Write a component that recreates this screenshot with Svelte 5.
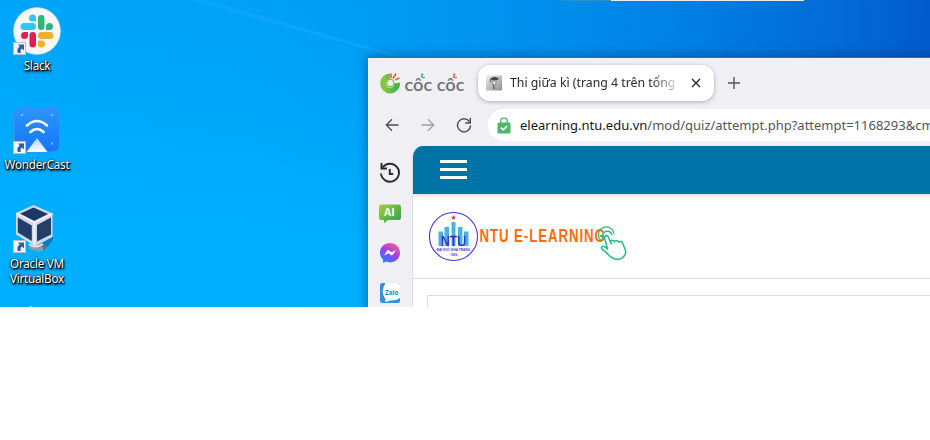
<script>
  const url = { host: 'elearning.ntu.edu.vn', path: '/mod/quiz/attempt.php?attempt=1168293&cm' };
</script>

{#snippet shortcut()}
  <g>
    <rect x="0.5" y="35.5" width="12" height="12" fill="#f4f6fa" stroke="#b9bfc8" />
    <path d="M5 37.500h6v6l-2-2c-1.500 1.200-1.800 2.600-1.200 4.500h-3c-1-2.800-.4-4.900 1.900-6.500z" fill="#2f5fa6" />
  </g>
{/snippet}

<main class="desktop">
  <svg class="ray" viewBox="0 0 400 58" aria-hidden="true">
    <defs>
      <linearGradient id="rayFill" x1="0" x2="1">
        <stop offset="0" stop-color="#5cc6ff" stop-opacity="0.08" />
        <stop offset="1" stop-color="#5cc6ff" stop-opacity="0.18" />
      </linearGradient>
    </defs>
    <path d="M190 0h16L400 56h-8z" fill="url(#rayFill)" />
  </svg>
  <div class="strip"><span class="teal"></span><span class="light"></span></div>

  <nav class="shortcuts">
    <div class="cell">
      <svg width="48" height="48" viewBox="0 0 48 48">
        <circle cx="24" cy="24" r="23.300" fill="#f7f7f7" stroke="#dcebf4" stroke-width="0.8" />
        <g fill="#36c5f0"><rect x="7.500" y="16" width="15.500" height="7" rx="3.500" /><path d="M23 14.500h-3.500a3.500 3.500 0 1 1 3.500-3.500z" /></g>
        <g fill="#2eb67d"><rect x="25" y="8" width="6.500" height="15" rx="3.250" /><path d="M33 23v-3.500a3.500 3.500 0 1 1 3.500 3.500z" /></g>
        <g fill="#ecb22e"><rect x="25" y="25" width="15.500" height="7" rx="3.500" /><path d="M25 33.500h3.500a3.500 3.500 0 1 1-3.500 3.500z" /></g>
        <g fill="#e01e5a"><rect x="16.500" y="25" width="6.500" height="15.500" rx="3.250" /><path d="M15 25v3.500a3.500 3.500 0 1 1-3.500-3.500z" /></g>
        {@render shortcut()}
      </svg>
      <span class="label">Slack</span>
    </div>
    <div class="cell">
      <svg width="48" height="48" viewBox="0 0 48 48">
        <defs>
          <linearGradient id="wc" x1="0" y1="0" x2="0" y2="1"><stop stop-color="#2b96fc" /><stop offset="1" stop-color="#1674f8" /></linearGradient>
          <linearGradient id="beam" x1="0" y1="0" x2="0" y2="1"><stop stop-color="#a8d2ff" /><stop offset="1" stop-color="#fff" /></linearGradient>
        </defs>
        <rect x="1.500" y="1.500" width="45" height="44.500" rx="7" fill="url(#wc)" stroke="#3f8fe8" />
        <g fill="none" stroke="#fff" stroke-width="2.600" stroke-linecap="round">
          <path d="M14 19.500q10-9 20 0" /><path d="M17.500 26q6.500-6 13 0" />
        </g>
        <path d="M24 32L34.500 46h-21z" fill="url(#beam)" />
        <path d="M8 10l2-2M38 8l2 2M38 38.500l2-2" stroke="#83cfff" stroke-width="1.200" />
        {@render shortcut()}
      </svg>
      <span class="label">WonderCast</span>
    </div>
    <div class="cell">
      <svg width="48" height="48" viewBox="0 0 48 48">
        <ellipse cx="25" cy="42" rx="9" ry="4" fill="#8f9ab0" />
        <path d="M28 39l12-8v4L31 46z" fill="#12416f" opacity="0.45" />
        <path d="M20.500 0l19 8.500V32L22 41 3 29.500V8z" fill="#d3d8e8" />
        <path d="M20.500 2.500l14.500 6.500-13.800 7L7 8.700z" fill="#1c3963" />
        <path d="M4.800 12.500l14 8v15.500l-14-8.500z" fill="#213d69" />
        <path d="M38 12.500v17l-14 7V20z" fill="#243f69" />
        <path d="M3.500 8.300l18 9.200 18-8.800M21.400 17.500V40" fill="none" stroke="#eef0fa" stroke-width="2" />
        <path d="M16 39q6 5 14 0" fill="none" stroke="#dfe4ef" stroke-width="2" />
        {@render shortcut()}
      </svg>
      <span class="label">Oracle VM<br />VirtualBox</span>
    </div>
    <svg class="next" width="8" height="2" viewBox="0 0 8 2"><path d="M2 2q2-2 4 0z" fill="#bfe6fb" /></svg>
  </nav>

  <section class="window">
    <header class="tabs">
      <svg class="brand" width="88" height="30" viewBox="0 0 88 30">
        <defs><linearGradient id="cc"><stop stop-color="#8bc53f" /><stop offset="1" stop-color="#43b649" /></linearGradient></defs>
        <path d="M12.500 8.200A7.200 7.200 0 1 0 19.300 15" fill="none" stroke="url(#cc)" stroke-width="5.600" />
        <circle cx="12.300" cy="15" r="3.600" fill="#f0eff4" stroke="#79c143" stroke-width="1.300" />
        <path d="M13.200 5.500l.6 5M18.500 5.500l-4 5.500M20.800 9.800l-5 3" stroke="#f0eff4" stroke-width="3" />
        <path d="M12.700 5.500l.8 4.500M18 5.500l-3 5M21.500 9.800l-4.500 2.300" stroke="#f15a36" stroke-width="1.500" />
        <text class="wordmark" x="26.500" y="22.500" textLength="60" lengthAdjust="spacingAndGlyphs">côc côc</text>
        <path d="M43 6.500q3-1 1 1.200t3 2" fill="none" stroke="#43b86a" stroke-width="1.300" />
        <path d="M75 6.500q3-1 1 1.200t3 2" fill="none" stroke="#f1634a" stroke-width="1.300" />
      </svg>
      <div class="tab">
        <svg width="16" height="16" viewBox="0 0 16 16">
          <defs><linearGradient id="fav" x1="0" y1="0" x2="1" y2="1"><stop stop-color="#eee" /><stop offset="1" stop-color="#8e8e8e" /></linearGradient></defs>
          <rect width="16" height="15" y="0.500" fill="url(#fav)" />
          <path d="M4 3.700l4-2L12.500 3v1.500l-3 .7H6z" fill="#444" /><path d="M5.500 6h5L9 10l-1 4-1-4z" fill="#ddd" stroke="#777" stroke-width="0.700" /><path d="M4.300 4v3.500M7.500 9l.5 5" stroke="#555" stroke-width="0.800" />
        </svg>
        <span class="title">Thi giữa kì (trang 4 trên tổng</span>
        <svg class="close" width="10" height="10" viewBox="0 0 10 10"><path d="M1 1l8 8M9 1L1 9" stroke="#222" stroke-width="1.300" /></svg>
      </div>
      <svg class="plus" width="12" height="12" viewBox="0 0 12 12"><path d="M6 0v12M0 6h12" stroke="#55555a" stroke-width="1.400" /></svg>
    </header>

    <div class="toolbar">
      <svg width="14" height="14" viewBox="0 0 14 14"><path d="M13.500 7H1.500M7 1.300L1.300 7 7 12.700" fill="none" stroke="#4c4b50" stroke-width="1.300" /></svg>
      <svg class="fwd" width="14" height="14" viewBox="0 0 14 14"><path d="M.5 7h12M7 1.300L12.700 7 7 12.700" fill="none" stroke="#a2a1a6" stroke-width="1.300" /></svg>
      <svg class="reload" width="16" height="16" viewBox="0 0 16 16"><path d="M13.600 5A6.500 6.500 0 1 0 14.500 8.500" fill="none" stroke="#4c4b50" stroke-width="1.400" /><path d="M14.300 1v5H9.300" fill="none" stroke="#4c4b50" stroke-width="1.400" /></svg>
      <div class="address">
        <svg width="14" height="17" viewBox="0 0 14 17"><path d="M3.700 7V4.200a3.300 3.300 0 0 1 6.600 0V7" fill="none" stroke="#62c173" stroke-width="1.500" /><rect x="0.500" y="5.500" width="13" height="11" rx="1.500" fill="#4db868" /><path d="M4 10.700l2.200 2.200 4-4" fill="none" stroke="#fff" stroke-width="1.700" /></svg>
        <span class="url">{url.host}<span class="path">{url.path}</span></span>
      </div>
    </div>

    <div class="body">
      <aside>
        <svg width="22" height="22" viewBox="0 0 22 22"><path d="M3.600 5.500A9 9 0 1 1 2 11.500" fill="none" stroke="#29292b" stroke-width="1.900" /><path d="M2.500 1v5.500H8" fill="none" stroke="#29292b" stroke-width="1.900" /><path d="M10.800 7v5h3.400" fill="none" stroke="#29292b" stroke-width="1.900" /></svg>
        <svg class="ai" width="22" height="20" viewBox="0 0 22 20">
          <defs><linearGradient id="ai" x1="0" y1="0" x2="1" y2="1"><stop stop-color="#a5cf37" /><stop offset="0.6" stop-color="#55b449" /><stop offset="1" stop-color="#329b50" /></linearGradient></defs>
          <path d="M2.500.5h17A2.500 2.500 0 0 1 22 3v10.500a2.500 2.500 0 0 1-2.500 2.500H9l-3.800 3.300L5 16H2.500A2.500 2.500 0 0 1 0 13.500V3A2.500 2.500 0 0 1 2.500.5z" fill="url(#ai)" />
          <text x="5" y="12" class="ai-text">AI</text>
        </svg>
        <svg class="msg" width="20" height="20" viewBox="0 0 20 20">
          <defs><linearGradient id="ms" x1="0.200" y1="1" x2="0.800" y2="0"><stop stop-color="#168aff" /><stop offset="0.5" stop-color="#9b3cf7" /><stop offset="1" stop-color="#fb6877" /></linearGradient></defs>
          <path d="M10 0C4.400 0 0 4.100 0 9.700c0 2.900 1.200 5.400 3.100 7.100V20l3.100-1.400A11 11 0 0 0 10 19.400c5.600 0 10-4.100 10-9.700S15.600 0 10 0z" fill="url(#ms)" />
          <path d="M4 12.500l3-4.700a1.500 1.500 0 0 1 2.200-.4l2.300 1.800L16 6.900l-3 4.700a1.500 1.500 0 0 1-2.200.4l-2.300-1.800z" fill="#fff" />
        </svg>
        <svg class="zalo" width="20" height="20" viewBox="0 0 20 20">
          <rect width="20" height="20" rx="2.500" fill="#358fda" />
          <path d="M5.500 0h12A2.500 2.500 0 0 1 20 2.500V15q-4 3-10 2.500-3 1.500-5.500 1.300 1.500-1 .9-2.800-5.500-7 .1-16z" fill="#fff" />
          <text x="5" y="11.500" class="zalo-text" textLength="13.500" lengthAdjust="spacingAndGlyphs">Zalo</text>
        </svg>
      </aside>

      <article>
        <div class="topbar"><div class="burger"><i></i><i></i><i></i></div></div>
        <div class="site">
          <svg width="200" height="54" viewBox="0 0 200 54">
            <circle cx="24.500" cy="27.500" r="24" fill="#fff" stroke="#4932d9" stroke-width="1.100" />
            <path d="M24.500 6l.7 1.700 1.900.1-1.500 1.200.5 1.800-1.600-1-1.600 1 .5-1.800-1.500-1.200 1.900-.1z" fill="#e33a28" />
            <path d="M9.500 37V22.500H14v14.500zM15.500 37V18H20V37zM22.500 37V13h4v24zM29 37V18H33.500V37zM35 37V22.500h4.500v14.500z" fill="#48b3df" />
            <text x="12" y="36.800" class="ntu" textLength="25" lengthAdjust="spacingAndGlyphs">NTU</text>
            <text x="7.700" y="41.700" class="tiny" textLength="33.500" lengthAdjust="spacingAndGlyphs">ĐẠI HỌC NHA TRANG</text>
            <text x="21.300" y="46.700" class="tiny" textLength="7" lengthAdjust="spacingAndGlyphs">1959</text>
            <text transform="translate(50.500 32.500) scale(.7 1)" x="0" y="0" class="learn" textLength="179">NTU E-LEARNING</text>
            <g fill="none" stroke="#20bd83" stroke-width="1.500" stroke-linejoin="round" stroke-linecap="round">
              <path d="M174.500 30.500a5 5 0 1 1 8.500-5" /><path d="M171.500 31a7.800 7.800 0 1 1 13.500-6" stroke-width="1.100" />
              <path d="M177.500 41l-2.800-10.500c-.7-3 2.800-4 3.800-1.200l2.700 6.700-.8-2.500c1-2 3.300-1.300 3.900.4.900-1.800 3.500-1.700 4.200.2 1.500-1.300 3.600-.6 4.200 1.200l2.600 6.500c1.500 4.500-2.200 9-6.800 9.400-5 .4-8.600-2.500-11-5.500l-5.500-4.500c-1.500-2.200.6-4 3-2.300z" transform="translate(1 -1)" />
            </g>
          </svg>
        </div>
        <div class="content"><div class="panel"></div></div>
      </article>
    </div>
  </section>
</main>

<style>
  :global(body) { margin: 0; background: #fff; }
  .desktop {
    position: relative; width: 930px; height: 307px; overflow: hidden;
    font-family: "Noto Sans", "Open Sans", sans-serif;
    background:
      linear-gradient(180deg, rgba(0, 176, 255, 0) 0, rgba(0, 176, 255, 0.9) 240px) 0 0 / 368px 307px no-repeat,
      linear-gradient(94deg, #00a5f8 0, #00a1f7 260px, #0098f1 430px, #018eeb 560px, #007be1 720px, #036bd7 830px, #025bcd 930px);
  }
  .ray { position: absolute; left: 0; top: 0; width: 400px; height: 58px; }
  .strip { position: absolute; left: 563px; top: 0; display: flex; height: 1px; }
  .teal { width: 48px; background: #2a93c9; }
  .light { width: 193px; background: #e7ecf1; }
  .shortcuts { display: flex; flex-direction: column; width: 74px; }
  .cell { box-sizing: border-box; height: 99px; padding-top: 7px; display: flex; flex-direction: column; align-items: center; flex: none; }
  .cell svg { display: block; flex: none; }
  .label {
    margin-top: 3px; font-size: 11.7px; line-height: 15px; text-align: center; color: #fff; white-space: nowrap; letter-spacing: -0.25px;
    text-shadow: 0 0 1px #000, 1px 1px 1px #000, 0 1px 3px rgba(0, 0, 0, 0.9), 1px 2px 2px rgba(0, 0, 0, 0.6);
  }
  .next { margin: 8px 0 0 27px; }
  .window {
    position: absolute; left: 368px; top: 57px; width: 600px; height: 290px; box-sizing: border-box;
    border-top: 1px solid #53677d; background: #f0eff4; box-shadow: 0 0 11px rgba(0, 30, 70, 0.48);
    display: flex; flex-direction: column;
  }
  .tabs { display: flex; height: 51px; padding-top: 7px; box-sizing: border-box; flex: none; }
  .brand { margin: 3px 0 0 10px; }
  .wordmark { font: 600 17.5px Lato, sans-serif; fill: #707176; }
  .tab {
    margin-left: 12px; width: 236px; height: 36px; box-sizing: border-box; border-radius: 12px; background: #fff;
    box-shadow: 0 1px 4px rgba(0, 0, 0, 0.28); display: flex; align-items: center; padding: 0 13px 0 8px;
  }
  .title {
    margin-left: 8px; width: 168px; overflow: hidden; white-space: nowrap; font-size: 12.3px; line-height: 20px; color: #2b2b2e;
    -webkit-mask-image: linear-gradient(90deg, #000 142px, transparent 172px); mask-image: linear-gradient(90deg, #000 142px, transparent 172px);
  }
  .close { margin-left: auto; }
  .plus { margin: 12px 0 0 14px; }
  .toolbar { display: flex; align-items: center; height: 32px; padding-left: 17px; flex: none; }
  .toolbar > svg { flex: none; }
  .fwd { margin-left: 22px; }
  .reload { margin-left: 21px; }
  .address { margin-left: 16px; height: 32px; flex: 1; min-width: 0; overflow: hidden; background: #fff; border-radius: 16px 0 0 16px; display: flex; align-items: center; padding-left: 9px; }
  .address svg { flex: none; }
  .url { margin-left: 9px; font-size: 13px; line-height: 20px; color: #17171a; white-space: nowrap; }
  .path { color: #55555b; }
  .body { flex: 1; display: flex; padding-top: 5px; }
  aside { width: 44px; display: flex; flex-direction: column; align-items: center; padding-top: 16px; box-sizing: border-box; flex: none; }
  .ai { margin-top: 20px; }
  .ai-text { font: 700 10.500px "Open Sans", sans-serif; fill: #fff; }
  .msg { margin-top: 19px; }
  .zalo { margin-top: 20px; }
  .zalo-text { font: 700 7px "Open Sans", sans-serif; fill: #168bd8; }
  article { flex: 1; border-left: 1px solid #dedee2; border-top-left-radius: 11px; background: #fff; overflow: hidden; display: flex; flex-direction: column; }
  .topbar { height: 48px; flex: none; background: #0073a6; box-shadow: 0 2px 4px rgba(0, 0, 0, 0.14); box-sizing: border-box; padding: 14px 0 0 27px; }
  .burger { display: flex; flex-direction: column; gap: 5px; width: 27px; }
  .burger i { height: 3px; background: #fff; }
  .site { height: 84px; box-sizing: border-box; padding: 15px 0 0 16px; flex: none; }
  .ntu { font: 400 15px "Liberation Sans", Arial, sans-serif; fill: #3925c4; stroke: #3925c4; stroke-width: 0.4px; }
  .tiny { font: 700 3.900px "Liberation Sans", Arial, sans-serif; fill: #4932d9; }
  .learn { font: 700 19px "Liberation Sans", Arial, sans-serif; fill: #ff6d0a; }
  .content { flex: 1; border-top: 1px solid #dedfe1; padding: 16px 0 0 14px; }
  .panel { height: 60px; border: 1px solid #dcdde0; }
</style>
